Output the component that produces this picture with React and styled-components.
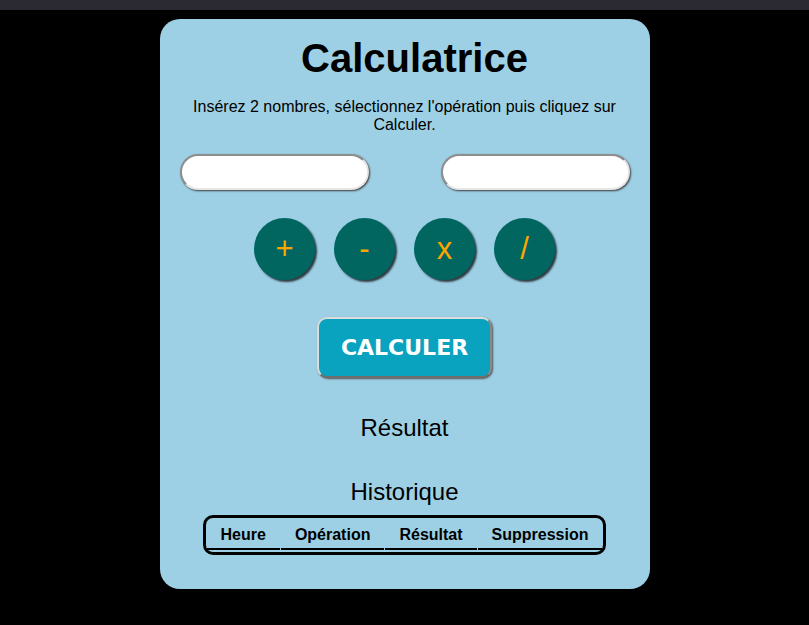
import styled, { createGlobalStyle } from 'styled-components';

const GlobalStyle = createGlobalStyle`
  body {
    margin: 0;
    background: #000;
    font-family: "Liberation Sans", Arial, sans-serif;
  }
`;

const TopBar = styled.div`
  height: 10px;
  background: #2b2a33;
`;

const Page = styled.main`
  display: flex;
  justify-content: center;
  padding-top: 9px;
  min-height: 606px;
  background: #000;
`;

const Card = styled.section`
  width: 490px;
  height: 570px;
  box-sizing: border-box;
  padding: 16px 20px 0;
  background: #9ed0e5;
  border-radius: 20px;
  display: flex;
  flex-direction: column;
  align-items: center;
  color: #000;
`;

const Title = styled.h1`
  margin: 0 0 0 20px;
  font-size: 40px;
  line-height: 46px;
  font-weight: bold;
`;

const Hint = styled.p`
  margin: 17px 0 0;
  font-size: 16px;
  line-height: 18px;
  text-align: center;
  padding: 0 12px;
`;

const Inputs = styled.div`
  margin-top: 20px;
  align-self: stretch;
  display: flex;
  justify-content: space-between;
`;

const NumberInput = styled.input`
  width: 189px;
  height: 36px;
  box-sizing: border-box;
  border: 2px solid;
  border-color: #8e8e8e #e6e6e6 #e6e6e6 #8e8e8e;
  border-radius: 18px;
  background: #fff;
  box-shadow: 1px 1px 2px #3a3a3a;
  outline: none;
`;

const Operators = styled.div`
  margin-top: 28px;
  display: flex;
  gap: 19px;
`;

const OpButton = styled.button`
  width: 61px;
  height: 62px;
  border-radius: 50%;
  border: none;
  background: #016660;
  color: #ffa500;
  font-family: "Liberation Sans", Arial, sans-serif;
  font-size: 31px;
  box-shadow: 2px 2px 2px #2d3b40;
  padding: 0;
`;

const Calculate = styled.button`
  margin-top: 37px;
  width: 175px;
  height: 61px;
  box-sizing: border-box;
  background: #0aa3bf;
  border: 2px solid;
  border-color: #dcdcdc #8a8a8a #6e6e6e #dcdcdc;
  border-radius: 10px;
  box-shadow: 1px 1px 2px #555;
  color: #fff;
  font-family: "DejaVu Sans", Verdana, sans-serif;
  font-weight: bold;
  font-size: 22px;
  padding: 0;
`;

const Heading = styled.h2`
  margin: ${({ $gap }) => $gap}px 0 0;
  font-size: 24px;
  line-height: 28px;
  font-weight: normal;
`;

const History = styled.table`
  margin-top: 9px;
  border: 3px solid #000;
  border-radius: 10px;
  border-spacing: 1px 0;
  padding: 2px 0 2px;
`;

const HeadCell = styled.th`
  font-size: 16px;
  line-height: 18px;
  font-weight: bold;
  padding: 6px 14px 4px;
  border-bottom: 2px solid #000;
`;

const App = () => (
  <>
    <GlobalStyle />
    <TopBar />
    <Page>
      <Card>
        <Title>Calculatrice</Title>
        <Hint>
          Insérez 2 nombres, sélectionnez l'opération puis cliquez sur
          Calculer.
        </Hint>
        <Inputs>
          <NumberInput type="text" />
          <NumberInput type="text" />
        </Inputs>
        <Operators>
          {['+', '-', 'x', '/'].map((op) => (
            <OpButton key={op}>{op}</OpButton>
          ))}
        </Operators>
        <Calculate>CALCULER</Calculate>
        <Heading $gap={36}>Résultat</Heading>
        <Heading $gap={36}>Historique</Heading>
        <History>
          <thead>
            <tr>
              <HeadCell>Heure</HeadCell>
              <HeadCell>Opération</HeadCell>
              <HeadCell>Résultat</HeadCell>
              <HeadCell>Suppression</HeadCell>
            </tr>
          </thead>
        </History>
      </Card>
    </Page>
  </>
);

export default App;
